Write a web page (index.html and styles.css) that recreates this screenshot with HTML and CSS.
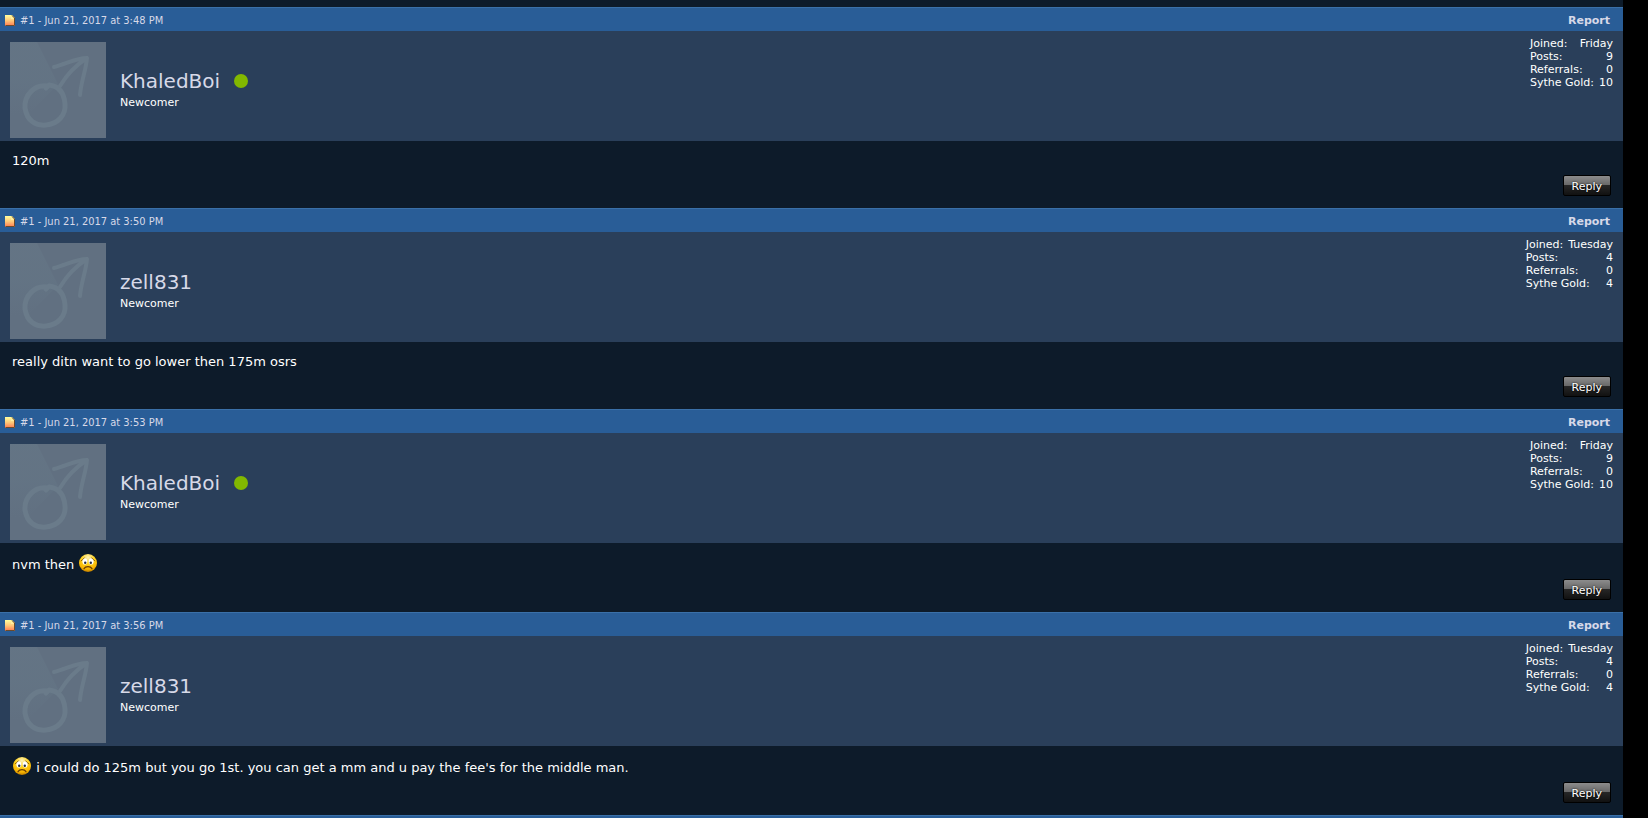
FILE: index.html
```
<!DOCTYPE html>
<html lang="en">

<head>
	<meta charset="utf-8">
	<title>Posts</title>
	<meta name="viewport" content="width=device-width, initial-scale=1">
	<link rel="stylesheet" href="styles.css">
</head>

<body>
	<!-- shared drawings -->
	<svg class="defs" aria-hidden="true">
		<linearGradient id="page-fill" x1="0" y1="0" x2="0" y2="1">
			<stop offset="0" stop-color="#ffffa0" />
			<stop offset="0.5" stop-color="#ffc878" />
			<stop offset="1" stop-color="#ff7850" />
		</linearGradient>
		<linearGradient id="shade" x1="0" y1="0" x2="0" y2="1">
			<stop offset="0" stop-color="#657686" />
			<stop offset="0.4" stop-color="#647585" />
			<stop offset="0.8" stop-color="#617081" />
		</linearGradient>
		<radialGradient id="face-fill" cx="0.5" cy="0.2" r="0.8">
			<stop offset="0" stop-color="#fff3b8" />
			<stop offset="0.45" stop-color="#ffd21c" />
			<stop offset="0.8" stop-color="#f8b400" />
			<stop offset="1" stop-color="#b87800" />
		</radialGradient>
		<symbol id="page" viewBox="0 0 10 11">
			<path d="M0 0H7L10 3V11H0Z" fill="url(#page-fill)" />
			<path d="M7 0.5L9.5 3V10.5H0.5" fill="none" stroke="#6b4a2a" />
			<path d="M6 1V4H9Z" fill="#fff0a0" />
		</symbol>
		<symbol id="male" viewBox="0 0 96 96">
			<path d="M0 0H27L48 42L0 92Z" fill="url(#shade)" opacity="0.7" />
			<g fill="none" stroke="#6a7b8a" stroke-linecap="round" stroke-linejoin="round">
				<path d="M37 44C25 42 14 53 15 66C17 79 26 84 36 83C48 82 56 73 55 62C54 50 48 44 39 43L36 46" stroke-width="5" />
				<path d="M50 44C56 34 66 23 77 16M44 25C56 22 66 16 77 16C76 28 71 40 70 53" stroke-width="4" />
			</g>
		</symbol>
		<symbol id="sad" viewBox="0 0 20 20">
			<circle cx="10" cy="10" r="9" fill="url(#face-fill)" />
			<ellipse cx="6.8" cy="8.4" rx="2.4" ry="3.1" fill="#fff" />
			<ellipse cx="13.2" cy="8.4" rx="2.4" ry="3.1" fill="#fff" />
			<circle cx="7.2" cy="9.8" r="1.2" fill="#222a44" />
			<circle cx="12.8" cy="9.8" r="1.2" fill="#222a44" />
			<path d="M2.8 8C4 7.2 5.6 6 6.5 4.6M17.2 8C16 7.2 14.4 6 13.5 4.6" fill="none" stroke="#8a5a00" stroke-width="0.9" />
			<path d="M6 15.6C7.5 13 12.5 13 14 15.6" fill="none" stroke="#6b3c00" stroke-width="1.2" stroke-linecap="round" />
		</symbol>
	</svg>

	<main class="posts">
		<article class="post">
			<header class="post-bar">
				<svg class="page-icon"><use href="#page" /></svg>
				<a class="post-date" href="#">#1 - Jun 21, 2017 at 3:48 PM</a>
				<a class="report" href="#">Report</a>
			</header>
			<div class="user">
				<svg class="avatar"><use href="#male" /></svg>
				<div class="user-text">
					<div class="user-line"><a class="username" href="#">KhaledBoi</a><span class="online"></span></div>
					<div class="user-title">Newcomer</div>
				</div>
				<dl class="stats">
					<div><dt>Joined:</dt><dd>Friday</dd></div>
					<div><dt>Posts:</dt><dd>9</dd></div>
					<div><dt>Referrals:</dt><dd>0</dd></div>
					<div><dt>Sythe Gold:</dt><dd>10</dd></div>
				</dl>
			</div>
			<div class="content">
				<p class="message">120m</p>
				<button class="reply" type="button">Reply</button>
			</div>
		</article>

		<article class="post">
			<header class="post-bar">
				<svg class="page-icon"><use href="#page" /></svg>
				<a class="post-date" href="#">#1 - Jun 21, 2017 at 3:50 PM</a>
				<a class="report" href="#">Report</a>
			</header>
			<div class="user">
				<svg class="avatar"><use href="#male" /></svg>
				<div class="user-text">
					<div class="user-line"><a class="username" href="#">zell831</a></div>
					<div class="user-title">Newcomer</div>
				</div>
				<dl class="stats">
					<div><dt>Joined:</dt><dd>Tuesday</dd></div>
					<div><dt>Posts:</dt><dd>4</dd></div>
					<div><dt>Referrals:</dt><dd>0</dd></div>
					<div><dt>Sythe Gold:</dt><dd>4</dd></div>
				</dl>
			</div>
			<div class="content">
				<p class="message">really ditn want to go lower then 175m osrs</p>
				<button class="reply" type="button">Reply</button>
			</div>
		</article>

		<article class="post">
			<header class="post-bar">
				<svg class="page-icon"><use href="#page" /></svg>
				<a class="post-date" href="#">#1 - Jun 21, 2017 at 3:53 PM</a>
				<a class="report" href="#">Report</a>
			</header>
			<div class="user">
				<svg class="avatar"><use href="#male" /></svg>
				<div class="user-text">
					<div class="user-line"><a class="username" href="#">KhaledBoi</a><span class="online"></span></div>
					<div class="user-title">Newcomer</div>
				</div>
				<dl class="stats">
					<div><dt>Joined:</dt><dd>Friday</dd></div>
					<div><dt>Posts:</dt><dd>9</dd></div>
					<div><dt>Referrals:</dt><dd>0</dd></div>
					<div><dt>Sythe Gold:</dt><dd>10</dd></div>
				</dl>
			</div>
			<div class="content">
				<p class="message">nvm then <svg class="smiley"><use href="#sad" /></svg></p>
				<button class="reply" type="button">Reply</button>
			</div>
		</article>

		<article class="post">
			<header class="post-bar">
				<svg class="page-icon"><use href="#page" /></svg>
				<a class="post-date" href="#">#1 - Jun 21, 2017 at 3:56 PM</a>
				<a class="report" href="#">Report</a>
			</header>
			<div class="user">
				<svg class="avatar"><use href="#male" /></svg>
				<div class="user-text">
					<div class="user-line"><a class="username" href="#">zell831</a></div>
					<div class="user-title">Newcomer</div>
				</div>
				<dl class="stats">
					<div><dt>Joined:</dt><dd>Tuesday</dd></div>
					<div><dt>Posts:</dt><dd>4</dd></div>
					<div><dt>Referrals:</dt><dd>0</dd></div>
					<div><dt>Sythe Gold:</dt><dd>4</dd></div>
				</dl>
			</div>
			<div class="content">
				<p class="message"><svg class="smiley"><use href="#sad" /></svg> i could do 125m but you go 1st. you can get a mm and u pay the fee's for the middle man.</p>
				<button class="reply" type="button">Reply</button>
			</div>
		</article>
		<div class="posts-end"></div>
	</main>
</body>

</html>
```
FILE: styles.css
```
:root {
	--bar: #295d97;
	--bar-edge: #3a70a8;
	--panel: #2a3f5a;
	--page: #0d1b2a;
	--link: #d7d9e8;
}

* {
	box-sizing: border-box;
}

body {
	margin: 0;
	background: black;
	color: white;
	font-family: Verdana, "DejaVu Sans", sans-serif;
	font-size: 11px;
}

a {
	color: var(--link);
	text-decoration: none;
}

.defs {
	position: absolute;
	width: 0;
	height: 0;
}

.posts {
	margin-right: 25px;
	padding-top: 7px;
	background: var(--page);
}

.post-bar {
	display: flex;
	align-items: center;
	height: 24px;
	padding: 2px 13px 0 5px;
	border-top: 1px solid var(--bar-edge);
	background: var(--bar);
}

.page-icon {
	width: 10px;
	height: 11px;
	margin-right: 5px;
}

.post-date {
	flex: 1;
	font-family: Tahoma, "DejaVu Sans Condensed", "DejaVu Sans", sans-serif;
}

.report {
	font-weight: bold;
}

.user {
	display: flex;
	height: 110px;
	padding: 11px 10px 0;
	background: var(--panel);
}

.avatar {
	width: 96px;
	height: 96px;
	background: #617081;
}

.user-text {
	flex: 1;
	padding: 26px 0 0 14px;
}

.user-line {
	display: flex;
	align-items: center;
	line-height: 26px;
}

.username {
	font-size: 20px;
}

.online {
	width: 14px;
	height: 14px;
	margin-left: 14px;
	border-radius: 50%;
	background: #82b800;
}

.user-title {
	line-height: 18px;
}

.stats {
	margin: -5px 0 0;
	line-height: 13px;
}

.stats div {
	display: flex;
	justify-content: space-between;
	gap: 5px;
}

.stats dd {
	margin: 0;
}

.content {
	display: flex;
	flex-direction: column;
	padding: 10px 12px 12px;
}

.message {
	margin: 0 0 5px;
	font-size: 13px;
	line-height: 19px;
}

.smiley {
	width: 20px;
	height: 20px;
	vertical-align: -4px;
}

.reply {
	align-self: flex-end;
	height: 21px;
	padding: 2px 8px 0;
	border: 1px solid black;
	border-radius: 2px;
	background: linear-gradient(to bottom, #8c8c8c, #666 50%, #262626 50%, #111);
	color: white;
	font: inherit;
	text-shadow: 0 0 2px black;
}

.posts-end {
	height: 3px;
	border-top: 1px solid var(--bar-edge);
	background: var(--bar);
}
```
